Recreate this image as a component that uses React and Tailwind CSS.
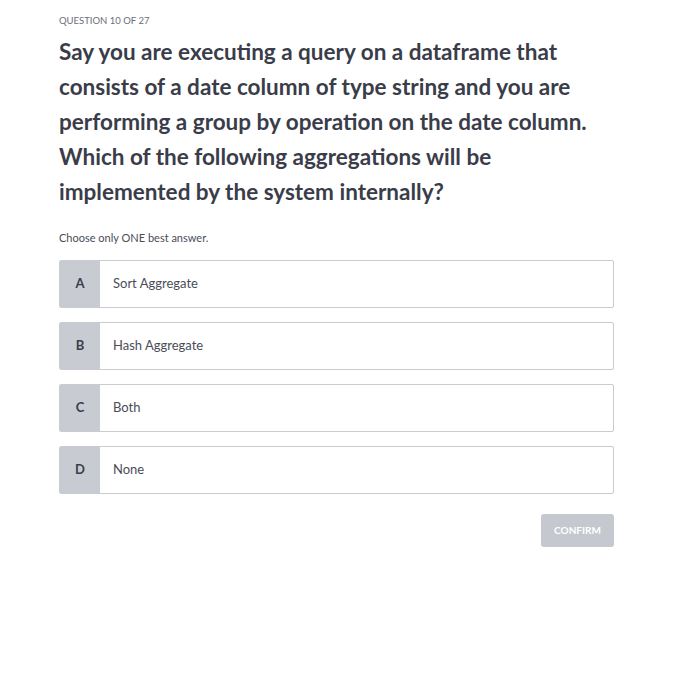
import React from 'react';

const options = [
    { key: 'A', label: 'Sort Aggregate' },
    { key: 'B', label: 'Hash Aggregate' },
    { key: 'C', label: 'Both' },
    { key: 'D', label: 'None' },
];

export default function App() {
    return (
        <div className="min-h-[685px] bg-white" style={{ fontFamily: 'Lato, "Noto Sans", sans-serif' }}>
            <div className="w-[555px] ml-[59px] pt-[15px]">
                <p className="text-[9.5px] text-[#6b6e78] uppercase leading-[12px]">Question 10 of 27</p>
                <h1 className="mt-[7px] text-[22.5px] font-bold leading-[35px] text-[#3a3d49]">
                    Say you are executing a query on a dataframe that consists of a date column of type string and you are performing a group by operation on the date column. Which of the following aggregations will be implemented by the system internally?
                </h1>
                <p className="mt-[22px] text-[11px] text-[#4a4d58] leading-[14px]">Choose only ONE best answer.</p>
                <div className="mt-[15px] flex flex-col gap-[14px]">
                    {options.map(o => (
                        <div key={o.key} className="flex h-[48px] border border-[#c9cbd3] rounded-[2px] overflow-hidden">
                            <div className="w-[40px] bg-[#c9cbd3] flex items-center justify-center text-[13px] font-bold text-[#3a3d49]">{o.key}</div>
                            <div className="pl-[13px] flex items-center text-[13px] text-[#4a4d58]">{o.label}</div>
                        </div>
                    ))}
                </div>
                <div className="flex justify-end mt-[20px]">
                    <button className="w-[73px] h-[33px] rounded-[3px] bg-[#c6c8cf] text-white text-[10px] font-bold uppercase">Confirm</button>
                </div>
            </div>
        </div>
    );
}
